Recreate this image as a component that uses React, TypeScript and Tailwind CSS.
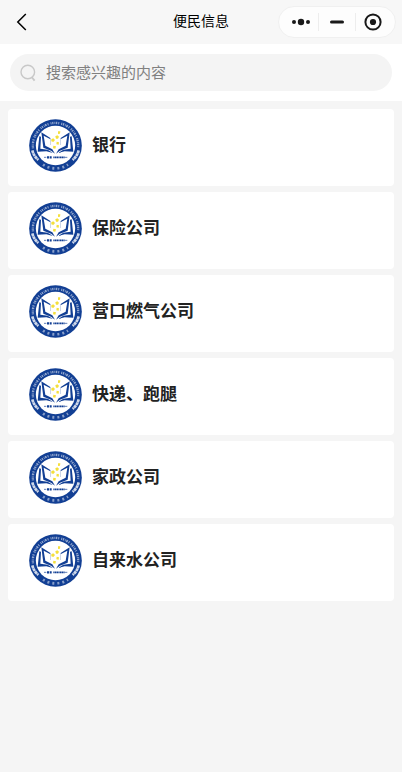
import { useState } from "react";

type Category = {
  id: number;
  name: string;
};

const categories: Category[] = [
  { id: 1, name: "银行" },
  { id: 2, name: "保险公司" },
  { id: 3, name: "营口燃气公司" },
  { id: 4, name: "快递、跑腿" },
  { id: 5, name: "家政公司" },
  { id: 6, name: "自来水公司" },
];

function BookPage() {
  return (
    <>
      <path d="M37 40L64 57L63 60L44 50L49 80L70 91L78 104L66 95L43 86Z" />
      <path d="M64 57V78" stroke="#123f94" strokeWidth="1.5" opacity="0.5" />
      <path d="M31 52L36 53L34 89L56 92L72 102L52 97L26 98Z" />
    </>
  );
}

function Logo() {
  return (
    <svg viewBox="0 0 159 159" className="size-[53px] shrink-0" aria-hidden="true">
      <circle cx="79.5" cy="79.5" r="79" fill="#123f94" />
      <circle cx="79.5" cy="79.5" r="59" fill="#fff" />
      {/* Lettering around the ring */}
      <g fill="none" stroke="#fff">
        <path d="M12 88A68 68 0 1 1 147 88" strokeWidth="7" strokeDasharray="3 2 4 3 2 2 5 3 3 6" opacity="0.55" />
        <path d="M42 137A69 69 0 0 0 117 137" strokeWidth="8" strokeDasharray="6 9" opacity="0.5" />
      </g>
      {/* Wheat ears */}
      <g fill="none" stroke="#fff" strokeWidth="8" opacity="0.8">
        <path d="M10 94Q14 111 28 123" strokeDasharray="9 1" />
        <path d="M149 94Q145 111 131 123" strokeDasharray="9 1" />
      </g>
      {/* Open book */}
      <g fill="#123f94">
        <BookPage />
        <g transform="translate(159 0) scale(-1 1)">
          <BookPage />
        </g>
      </g>
      {/* Stars */}
      <g fill="#f4df3b">
        <path d="M87 37h7l-1 7-6 1z" />
        <path d="M79 52l6-3 5 4-3 6h-6z" />
        <path d="M67 61l6-3 5 5-5 6-6-2z" />
        <path d="M83 68l7 2-1 7-7-1z" />
        <path d="M73 80l8 2-2 7-7-1z" />
      </g>
      <g stroke="#123f94">
        <path d="M45 115H52M108 115H115" strokeWidth="2" />
        <path d="M54 115H69" strokeWidth="7" strokeDasharray="6 2" />
        <path d="M73 115H107" strokeWidth="5" strokeDasharray="4 1" />
      </g>
    </svg>
  );
}

function Capsule() {
  return (
    <div className="flex h-8 w-[118px] items-center divide-x divide-[#ededed] rounded-full border border-[#f0f0f0] bg-[#fdfdfd] px-1 text-[#191919]">
      <button type="button" aria-label="更多" className="flex h-[18px] flex-1 items-center justify-center">
        <svg viewBox="0 0 20 8" className="h-2 w-5" fill="currentColor">
          <circle cx="3" cy="4" r="2" />
          <circle cx="10" cy="4" r="3.2" />
          <circle cx="17" cy="4" r="2" />
        </svg>
      </button>
      <button type="button" aria-label="最小化" className="flex h-[18px] flex-1 items-center justify-center">
        <svg viewBox="0 0 14 4" className="h-1 w-[14px]">
          <path d="M1.5 2H12.5" stroke="currentColor" strokeWidth="3" strokeLinecap="round" />
        </svg>
      </button>
      <button type="button" aria-label="关闭" className="flex h-[18px] flex-1 items-center justify-center">
        <svg viewBox="0 0 18 18" className="size-[18px]">
          <circle cx="9" cy="9" r="7.6" fill="none" stroke="currentColor" strokeWidth="2" />
          <circle cx="9" cy="9" r="3.1" fill="currentColor" />
        </svg>
      </button>
    </div>
  );
}

export default function App() {
  const [keyword, setKeyword] = useState("");
  const visible = categories.filter((c) => c.name.includes(keyword.trim()));

  return (
    <main className="min-h-screen bg-[#f5f5f5] font-['Noto_Sans_CJK_SC',sans-serif]">
      {/* Header */}
      <header className="grid h-11 grid-cols-[1fr_auto_1fr] items-center bg-[#f7f7f7] pr-1.5 pl-4">
        <button type="button" aria-label="返回" className="justify-self-start">
          <svg viewBox="0 0 12 18" className="h-[18px] w-3" fill="none" stroke="#000" strokeWidth="1.5">
            <path d="M9.8 1L1.8 9L9.8 17" />
          </svg>
        </button>
        <h1 className="pr-2.5 pb-1 text-sm leading-5 text-black">便民信息</h1>
        <div className="justify-self-end">
          <Capsule />
        </div>
      </header>

      {/* Search */}
      <div className="bg-white p-2.5">
        <label className="flex h-[37px] items-center gap-2 rounded-full bg-[#f4f4f4] px-2.5">
          <svg viewBox="0 0 18 18" className="size-[18px] shrink-0" fill="none" stroke="#c8c8c8" strokeWidth="1.4">
            <circle cx="7.8" cy="8" r="6.8" />
            <path d="M11.6 13L14.6 16.6" strokeWidth="1.8" />
          </svg>
          <input
            type="text"
            value={keyword}
            onChange={(e) => setKeyword(e.target.value)}
            placeholder="搜索感兴趣的内容"
            aria-label="搜索"
            className="h-6 min-w-0 flex-1 bg-transparent pb-0.5 text-[15px] text-[#333] outline-none placeholder:text-[#808080]"
          />
        </label>
      </div>

      {/* Category list */}
      <ul className="flex flex-col gap-1.5 p-2">
        {visible.map((category) => (
          <li key={category.id}>
            <a href={`#category-${category.id}`} className="flex h-[77px] gap-2.5 rounded bg-white px-[21px] py-2.5">
              <Logo />
              <span className="pt-3 text-[17px] leading-[26px] font-bold text-[#222]">{category.name}</span>
            </a>
          </li>
        ))}
      </ul>
    </main>
  );
}
